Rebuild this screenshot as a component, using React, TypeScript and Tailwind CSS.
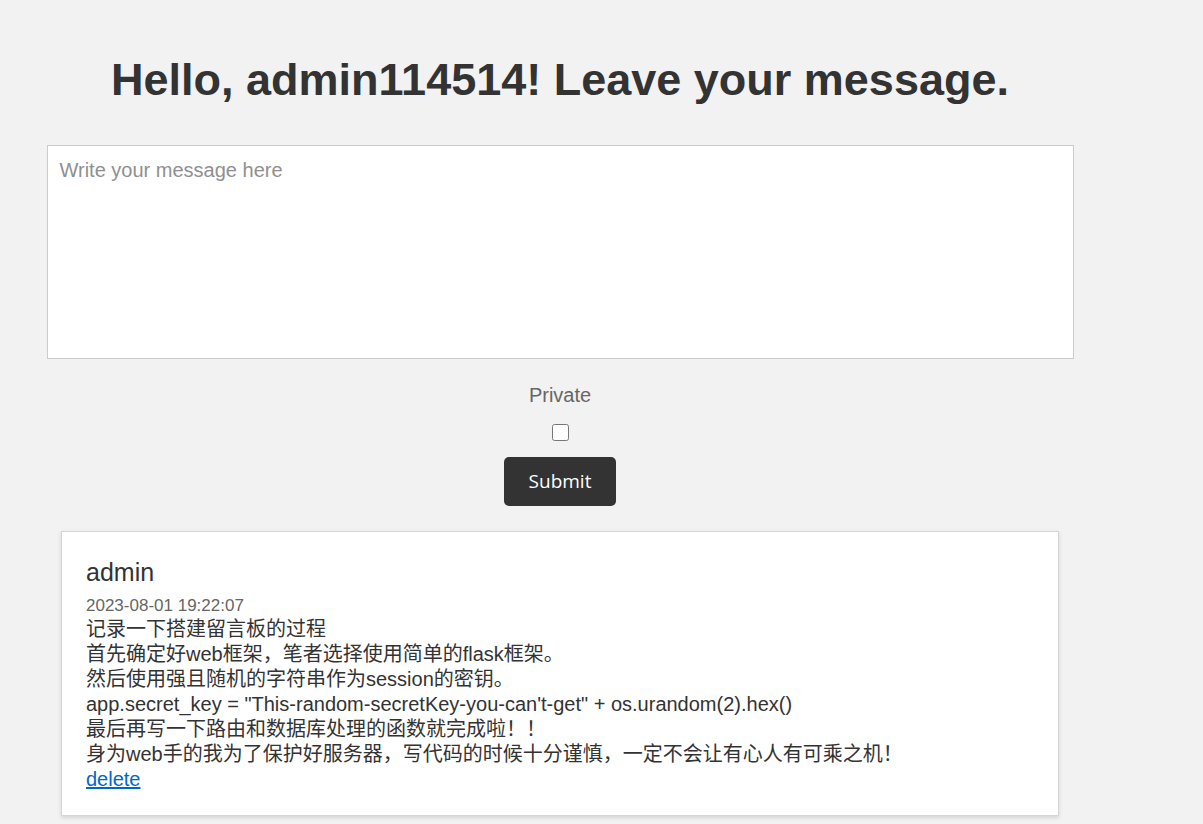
import { useState } from 'react';

const LINES = [
  '记录一下搭建留言板的过程',
  '首先确定好web框架，笔者选择使用简单的flask框架。',
  '然后使用强且随机的字符串作为session的密钥。',
  'app.secret_key = "This-random-secretKey-you-can\'t-get" + os.urandom(2).hex()',
  '最后再写一下路由和数据库处理的函数就完成啦！！',
  '身为web手的我为了保护好服务器，写代码的时候十分谨慎，一定不会让有心人有可乘之机！',
];

const FONT = "font-['Liberation_Sans','Noto_Sans_CJK_SC',sans-serif]";

export default function App() {
  const [message, setMessage] = useState('');
  const [isPrivate, setIsPrivate] = useState(false);

  return (
    <div className={`min-h-screen bg-[#f2f2f2] text-[#333] ${FONT}`}>
      <div className="w-[1120px] flex flex-col items-center pt-[54px] pb-10">
        {/* Header */}
        <h1 className="text-[45px] leading-[52px] font-bold text-[#333]">
          Hello, admin114514! Leave your message.
        </h1>

        {/* Form */}
        <textarea
          value={message}
          onChange={(e) => setMessage(e.target.value)}
          placeholder="Write your message here"
          className="mt-[39px] w-[1027px] h-[214px] resize-none bg-white border border-[#cccccc] px-3 pt-[13px] pb-3 text-[20px] leading-[23px] text-[#333] placeholder:text-[#8f8f8f] outline-none"
        />
        <label className="mt-[25px] text-[20px] leading-[23px] text-[#666]">Private</label>
        <input
          type="checkbox"
          checked={isPrivate}
          onChange={(e) => setIsPrivate(e.target.checked)}
          className="mt-[17px] w-[17px] h-[17px]"
        />
        <button className="mt-[16px] w-[112px] h-[49px] rounded-[5px] bg-[#333] text-white text-[19px] font-['Open_Sans',sans-serif]">
          Submit
        </button>

        {/* Messages */}
        <div className="mt-[25px] w-[998px] bg-white border border-[#d6d6d6] shadow-[0_2px_4px_rgba(0,0,0,0.12)] px-6 pt-[26px] pb-[23px]">
          <h3 className="text-[25px] leading-[29px]">admin</h3>
          <p className="mt-[9px] text-[17px] leading-[20px] text-[#666]">2023-08-01 19:22:07</p>
          <div className="mt-[1px] text-[20px] leading-[25px]">
            {LINES.map((line, i) => (
              <p key={i}>{line}</p>
            ))}
            <a href="#" className="text-[#0066cc] underline">
              delete
            </a>
          </div>
        </div>
      </div>
    </div>
  );
}
